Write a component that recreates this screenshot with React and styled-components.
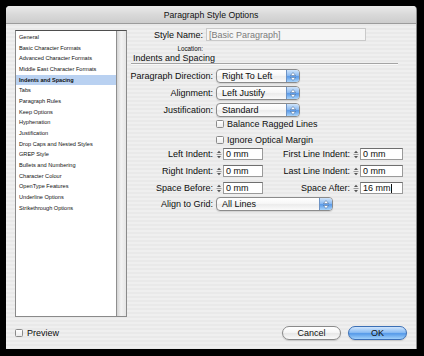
import React from "react";
import styled, { createGlobalStyle } from "styled-components";

const Global = createGlobalStyle`
  html, body { margin: 0; padding: 0; background: #000; }
  body { font-family: "Liberation Sans", Arial, sans-serif; color: #0d0d0d; }
`;

const Page = styled.div`
  width: 424px;
  height: 356px;
  padding: 6px 7px 7px 6px;
  box-sizing: border-box;
  background: #000;
`;

const Window = styled.div`
  width: 411px;
  height: 343px;
  display: flex;
  flex-direction: column;
  border-radius: 4px 4px 0 0;
  overflow: hidden;
  background: repeating-linear-gradient(
    to bottom,
    #efefef 0px,
    #efefef 2px,
    #e9e9e9 2px,
    #e9e9e9 4px
  );
  border-right: 1px solid #8c8c8c;
  box-sizing: border-box;
`;

const TitleBar = styled.div`
  height: 18px;
  flex: none;
  display: flex;
  align-items: center;
  justify-content: center;
  background: linear-gradient(#eaeaea, #d9d9d9 50%, #cdcdcd);
  border-bottom: 1px solid #9c9c9c;
  box-sizing: border-box;
  font-size: 8.7px;
  color: #111;
  padding-top: 1px;
`;

const Body = styled.div`
  flex: 1;
  display: flex;
  padding-left: 9px;
`;

const ListBox = styled.div`
  width: 112px;
  height: 287px;
  margin-top: 6px;
  flex: none;
  display: flex;
  box-sizing: border-box;
  border: 1px solid #8a8a8a;
  border-top-color: #4e4e4e;
`;

const List = styled.ul`
  flex: 1;
  margin: 0;
  padding: 1px 0 0;
  list-style: none;
  background: #fff;
`;

const Item = styled.li`
  height: 10.67px;
  line-height: 10.67px;
  padding-left: 3px;
  font-size: 5.6px;
  white-space: nowrap;
  color: #111;
  background: ${(p) => (p.$selected ? "#b9d1f1" : "transparent")};
  font-weight: ${(p) => (p.$selected ? "bold" : "normal")};
`;

const ScrollTrack = styled.div`
  width: 9px;
  border-left: 1px solid #8f8f8f;
  background: linear-gradient(to right, #d4d4d4, #f3f3f3 45%, #e6e6e6);
`;

const Main = styled.div`
  flex: 1;
  display: flex;
  flex-direction: column;
  padding-top: 4px;
  font-size: 9px;
`;

const Row = styled.div`
  display: flex;
  align-items: center;
  height: ${(p) => p.$h || 14}px;
  margin-top: ${(p) => p.$mt || 0}px;
  gap: 3px;
`;

const Label = styled.span`
  width: ${(p) => p.$w || 86}px;
  flex: none;
  text-align: right;
  white-space: nowrap;
  font-size: ${(p) => p.$size || 9}px;
`;

const NameField = styled.div`
  width: 160px;
  height: 13px;
  box-sizing: border-box;
  border: 1px solid #c9c9c9;
  background: #f5f5f5;
  color: #7b7b7b;
  display: flex;
  align-items: center;
  padding-left: 2px;
  font-size: 9px;
`;

const Heading = styled.div`
  height: 10px;
  margin: 0 18px 0 4px;
  padding-left: 2px;
  display: flex;
  align-items: center;
  border-bottom: 1px solid #a4a4a4;
  box-shadow: 0 1px 0 #fafafa;
  font-size: 9px;
`;

const Popup = styled.div`
  width: ${(p) => p.$w}px;
  height: 14px;
  box-sizing: border-box;
  border: 1px solid #8b8b8b;
  border-radius: 4px;
  display: flex;
  overflow: hidden;
  background: linear-gradient(#ffffff, #f7f7f7 45%, #ececec 55%, #fbfbfb);
  box-shadow: 0 1px 1px rgba(0, 0, 0, 0.12);
`;

const PopupText = styled.span`
  flex: 1;
  display: flex;
  align-items: center;
  padding-left: 5px;
  font-size: 9px;
  white-space: nowrap;
`;

const PopupArrows = styled.span`
  width: 12px;
  display: flex;
  align-items: center;
  justify-content: center;
  border-left: 1px solid #6e93c4;
  background: linear-gradient(#cfe4fb, #8ebcf2 45%, #5a9ae8 55%, #a9d4fb);
`;

const Check = styled.span`
  width: 8px;
  height: 8px;
  flex: none;
  box-sizing: border-box;
  border: 1px solid #8a8a8a;
  border-radius: 1.5px;
  background: linear-gradient(#ffffff, #ececec);
`;

const CheckText = styled.span`
  font-size: 9px;
  white-space: nowrap;
`;

const IndentGrid = styled.div`
  display: grid;
  grid-template-columns: 86px 47px 84px 50px;
  column-gap: 3px;
  align-items: center;
  height: 12px;
  margin-top: ${(p) => p.$mt || 0}px;
`;

const Field = styled.div`
  display: flex;
  align-items: center;
  gap: 1px;
`;

const NumBox = styled.div`
  width: ${(p) => p.$w}px;
  height: 12px;
  box-sizing: border-box;
  border: 1px solid #9a9a9a;
  border-top-color: #6f6f6f;
  background: #fff;
  display: flex;
  align-items: center;
  padding-left: 2px;
  font-size: 9px;
  white-space: nowrap;
`;

const Caret = styled.span`
  display: inline-block;
  width: 1px;
  height: 9px;
  background: #111;
`;

const Footer = styled.div`
  height: 32px;
  flex: none;
  display: flex;
  align-items: center;
  padding: 0 9px 0 9px;
  gap: 4px;
`;

const Spacer = styled.div`
  flex: 1;
`;

const Button = styled.div`
  width: 59px;
  height: 14px;
  box-sizing: border-box;
  border-radius: 7px;
  display: flex;
  align-items: center;
  justify-content: center;
  font-size: 9px;
  margin-left: ${(p) => p.$ml || 0}px;
  border: 1px solid ${(p) => (p.$primary ? "#3b6fb5" : "#8a8a8a")};
  background: ${(p) =>
    p.$primary
      ? "linear-gradient(#cfe5fd, #8cbdf3 45%, #559ae9 55%, #9fd0fb)"
      : "linear-gradient(#ffffff, #f6f6f6 45%, #e7e7e7 55%, #fafafa)"};
  color: #111;
  box-shadow: 0 1px 1px rgba(0, 0, 0, 0.15);
`;

const Arrows = () => (
  <svg width="6" height="9" viewBox="0 0 6 9">
    <polygon points="0.5,3.5 3,0.5 5.5,3.5" fill="#fff" stroke="#1d3d6e" strokeWidth="0.4" />
    <polygon points="0.5,5.5 3,8.5 5.5,5.5" fill="#fff" stroke="#1d3d6e" strokeWidth="0.4" />
  </svg>
);

const Stepper = () => (
  <svg width="6" height="9" viewBox="0 0 6 9">
    <polygon points="1,3 3,0.8 5,3" fill="#555" />
    <line x1="0.5" y1="4.5" x2="5.5" y2="4.5" stroke="#888" strokeWidth="0.8" />
    <polygon points="1,6 3,8.2 5,6" fill="#555" />
  </svg>
);

const items = [
  "General",
  "Basic Character Formats",
  "Advanced Character Formats",
  "Middle East Character Formats",
  "Indents and Spacing",
  "Tabs",
  "Paragraph Rules",
  "Keep Options",
  "Hyphenation",
  "Justification",
  "Drop Caps and Nested Styles",
  "GREP Style",
  "Bullets and Numbering",
  "Character Colour",
  "OpenType Features",
  "Underline Options",
  "Strikethrough Options",
];

const Select = ({ w, value }) => (
  <Popup $w={w}>
    <PopupText>{value}</PopupText>
    <PopupArrows>
      <Arrows />
    </PopupArrows>
  </Popup>
);

const NumField = ({ w, children }) => (
  <Field>
    <Stepper />
    <NumBox $w={w}>{children}</NumBox>
  </Field>
);

const IndentRow = ({ mt, l1, v1, l2, v2 }) => (
  <IndentGrid $mt={mt}>
    <Label>{l1}</Label>
    <NumField w={40}>{v1}</NumField>
    <Label $w={84}>{l2}</Label>
    <NumField w={43}>{v2}</NumField>
  </IndentGrid>
);

export default function App() {
  return (
    <Page>
      <Global />
      <Window>
        <TitleBar>Paragraph Style Options</TitleBar>
        <Body>
          <ListBox>
            <List>
              {items.map((t) => (
                <Item key={t} $selected={t === "Indents and Spacing"}>
                  {t}
                </Item>
              ))}
            </List>
            <ScrollTrack />
          </ListBox>
          <Main>
            <Row $h={13}>
              <Label $w={76}>Style Name:</Label>
              <NameField>[Basic Paragraph]</NameField>
            </Row>
            <Row $h={10} $mt={2}>
              <Label $w={76} $size={6.3}>
                Location:
              </Label>
            </Row>
            <Heading>Indents and Spacing</Heading>
            <Row $mt={5}>
              <Label>Paragraph Direction:</Label>
              <Select w={84} value="Right To Left" />
            </Row>
            <Row $mt={3}>
              <Label>Alignment:</Label>
              <Select w={84} value="Left Justify" />
            </Row>
            <Row $mt={3}>
              <Label>Justification:</Label>
              <Select w={84} value="Standard" />
            </Row>
            <Row $h={10} $mt={2}>
              <Label />
              <Check />
              <CheckText>Balance Ragged Lines</CheckText>
            </Row>
            <Row $h={10} $mt={6}>
              <Label />
              <Check />
              <CheckText>Ignore Optical Margin</CheckText>
            </Row>
            <IndentRow mt={3} l1="Left Indent:" v1="0 mm" l2="First Line Indent:" v2="0 mm" />
            <IndentRow mt={5} l1="Right Indent:" v1="0 mm" l2="Last Line Indent:" v2="0 mm" />
            <IndentRow
              mt={5}
              l1="Space Before:"
              v1="0 mm"
              l2="Space After:"
              v2={
                <>
                  16 mm
                  <Caret />
                </>
              }
            />
            <Row $mt={3}>
              <Label>Align to Grid:</Label>
              <Select w={117} value="All Lines" />
            </Row>
          </Main>
        </Body>
        <Footer>
          <Check />
          <CheckText>Preview</CheckText>
          <Spacer />
          <Button>Cancel</Button>
          <Button $primary $ml={3}>
            OK
          </Button>
        </Footer>
      </Window>
    </Page>
  );
}
